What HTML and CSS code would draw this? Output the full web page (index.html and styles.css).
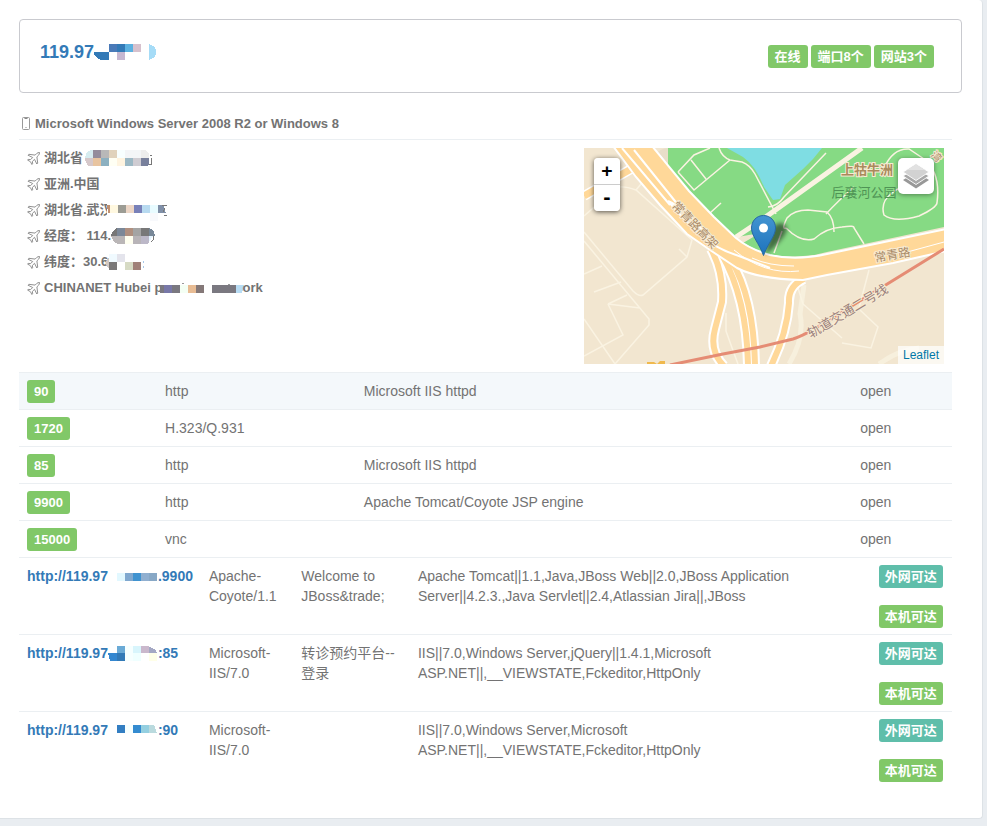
FILE: index.html
```html
<!DOCTYPE html>
<html lang="zh-CN">
<head>
<meta charset="utf-8">
<meta name="viewport" content="width=device-width, initial-scale=1">
<title>主机详情</title>
<link rel="stylesheet" href="styles.css">
</head>
<body>
<svg class="defs" width="0" height="0" aria-hidden="true">
  <symbol id="plane" viewBox="0 0 13 13">
    <path d="M12.5.5C11.500.5 10.500.7 9.700 1.500L8.100 3.100 1.900 2.300 1 3.200 5.700 5.500 3.600 7.600 1.200 7.400.5 8.100 3.200 9.500 3.500 9.800 4.900 12.500 5.600 11.800 5.400 9.400 7.500 7.300 9.800 12 10.700 11.100 9.900 4.900 11.500 3.300C12.300 2.500 12.500 1.500 12.500.5Z" fill="none" stroke="#858585" stroke-width=".9" stroke-linejoin="round"/>
  </symbol>
</svg>
<main class="panel">
  <header class="host">
    <h1 class="host-ip"><a href="#">119.97<svg class="mosaic" width="63" height="16" viewBox="1 0 63 16" shape-rendering="crispEdges" aria-hidden="true"><path d="M0 8h16v8H8Q3 15 0 8Z" fill="#337ab7"/><path d="M16 0h8v8h-8z" fill="#4a7ab8"/><path d="M24 0h8v8h-8z" fill="#337ab7"/><path d="M32 0h8v8h-8z" fill="#5cb1e0"/><path d="M40 0h8v8h-8z" fill="#d6c1cd"/><path d="M24 8h8v8h-8z" fill="#c6b7d1"/><path d="M56 0q7 2 7 8t-7 8z" fill="#a6dcf7"/></svg></a></h1>
    <div class="tags"><span class="tag">在线</span><span class="tag">端口8个</span><span class="tag">网站3个</span></div>
  </header>

  <section class="detail">
    <h2 class="os"><svg width="12" height="14" viewBox="0 0 12 14" aria-hidden="true"><rect x="3.500" y=".5" width="7" height="12" rx="1" fill="none" stroke="#999"/><path d="M5.500 1.500h3M6.500 10.500h1" stroke="#888"/></svg>Microsoft Windows Server 2008 R2 or Windows 8</h2>

    <div class="where">
      <ul class="facts">
        <li><svg class="plane"><use href="#plane"/></svg><span>湖北省</span><svg class="mosaic" width="70" height="16" shape-rendering="crispEdges" aria-hidden="true"><path d="M2 8h8v8H6Q2 13 2 8" fill="#d6c8ca"/><path d="M2 8q1-7 6-8h2v8z" fill="#d6ecf0"/><path d="M10 0h8v8h-8z" fill="#948c9c"/><path d="M18 0h8v8h-8z" fill="#b8b8b8"/><path d="M26 0h8v8h-8z" fill="#e0d2bc"/><path d="M34 0h8v8h-8z" fill="#f8ffff"/><path d="M42 0h16v8H42z" fill="#f3f5f7"/><path d="M58 0h4l4 4v4h-8z" fill="#ededed"/><path d="M10 8h8v8h-8z" fill="#e8c4a0"/><path d="M18 8h8v8h-8z" fill="#8cb0c0"/><path d="M26 8h8v8h-8z" fill="#fffff4"/><path d="M34 8h8v8h-8z" fill="#fff4e0"/><path d="M42 8h8v8h-8z" fill="#9cb8c4"/><path d="M50 8h8v8h-8z" fill="#cfccd2"/><path d="M58 8h8v6l-2 2h-6z" fill="#78809c"/><path d="M67 5h2M68 8v7M66 14h3" stroke="#777"/></svg></li>
        <li><svg class="plane"><use href="#plane"/></svg><span>亚洲.中国</span></li>
        <li><svg class="plane"><use href="#plane"/></svg><span>湖北省.武汉</span><svg class="mosaic over" width="60" height="16" shape-rendering="crispEdges" aria-hidden="true"><path d="M0 0h60v16H0z" fill="#fff"/><path d="M0 3h3v8H1z" fill="#c09070"/><path d="M3 3h8v8H3z" fill="#fff8e0"/><path d="M11 3h8v8h-8z" fill="#9c9c94"/><path d="M19 3h8v8h-8z" fill="#ecd6c6"/><path d="M27 3h8v8h-8z" fill="#7880b8"/><path d="M35 3h8v8h-8z" fill="#b8daf0"/><path d="M43 3h8v8h-8z" fill="#e8fbff"/><path d="M51 3h5l3 8h-8z" fill="#8090a8"/><path d="M43 11h8v8h-8z" fill="#f8f9fc"/><path d="M55 3h5M57 13h3M58 6l-2 4" stroke="#777"/></svg></li>
        <li><svg class="plane"><use href="#plane"/></svg><span>经度：&nbsp;114.</span><svg class="mosaic" width="44" height="16" shape-rendering="crispEdges" aria-hidden="true"><path d="M0 8q1-6 6-8v8z" fill="#777"/><path d="M0 8h14v8H8Q2 15 0 8" fill="#bab6b7"/><path d="M6 0h8v8H6z" fill="#7c8898"/><path d="M14 0h8v8h-8z" fill="#b09080"/><path d="M22 0h8v8h-8z" fill="#a4a4a4"/><path d="M30 0h8v8h-8z" fill="#787878"/><path d="M38 0q5 1 6 8h-6z" fill="#788898"/><path d="M14 8h8v8h-8z" fill="#fffff0"/><path d="M22 8h8v8h-8z" fill="#b8b4b8"/><path d="M30 8h8v7l-3 1h-5z" fill="#bcb8c8"/><path d="M38 8h4l-4 6z" fill="#e4f4ff"/><path d="M43 8q0 4-3 6" stroke="#777" fill="none"/></svg></li>
        <li><svg class="plane"><use href="#plane"/></svg><span>纬度：30.6</span><svg class="mosaic" width="38" height="16" viewBox="2 0 38 16" shape-rendering="crispEdges" aria-hidden="true"><path d="M0 8l3-5v12Q0 12 0 8" fill="#d2c8c2"/><path d="M3 0h8v8H3z" fill="#f0faff"/><path d="M11 0h8v8h-8z" fill="#e4e4ec"/><path d="M3 8h8v8H3z" fill="#7a7878"/><path d="M19 8h8v8h-8z" fill="#d6dac4"/><path d="M27 8h8v8h-8z" fill="#a08078"/><path d="M37 7v2M37 12v2" stroke="#a8c8e8"/></svg></li>
        <li><svg class="plane"><use href="#plane"/></svg><span>CHINANET Hubei p</span><svg class="mosaic" width="80" height="16" viewBox="2 0 80 16" shape-rendering="crispEdges" aria-hidden="true"><path d="M0 5h4v8H0zM12 5h8v8h-8zM52 5h24v8H52z" fill="#7a7880"/><path d="M4 5h8v8H4z" fill="#7878a8"/><path d="M20 5h8v8h-8z" fill="#f4fff4"/><path d="M28 5h8v8h-8z" fill="#e8bc94"/><path d="M36 5h8v8h-8z" fill="#847878"/><path d="M76 5h8l-2 8h-6z" fill="#b8dcf4"/><path d="M22 3h2M68 4h2" stroke="#999"/></svg><span>ork</span></li>
      </ul>

      <div class="map">
        <svg class="map-tiles" viewBox="0 0 360 216" preserveAspectRatio="xMidYMid slice" role="img" aria-label="地图">
          <defs>
            <linearGradient id="pin" x2="0" y2="1"><stop stop-color="#4394d1"/><stop offset="1" stop-color="#1d73bd"/></linearGradient>
            <filter id="soft" x="-30%" y="-30%" width="160%" height="160%"><feGaussianBlur stdDeviation="2"/></filter>
          </defs>
          <path d="M0 0h360v216H0z" fill="#f2e6d0"/>
          <path d="M70 8Q76 0 84 0v24z" fill="#e8dec9"/>
          <path d="M84 0h276v79L243 104Q220 111 183 107L159 95 176 85 148 90 84 20z" fill="#86da84"/>
          <path d="M143 0L159 9Q172 18 180 39L189 52 196 51 201 37 219 21 229 11 238 0z" fill="#7fdde3"/>
          <g fill="none" stroke="#faf3e2" stroke-width="1.500">
            <path d="M135 0Q138 9 146 12L158 14Q166 17 171 26L192 66"/>
            <path d="M94 24L110 7 126 0M94 24L110 42 146 12M107 12L122 31M126 65L137 55"/>
            <path d="M278 0L176 73 152 89" stroke-width="5"/>
            <path d="M184 59Q194 58 200 49L242 5M202 80Q197 82 203 70Q210 62 224 62L243 64Q250 70 250 84M202 80Q217 95 230 91Q242 80 258 79Q271 77 270 80L280 96M198 83L190 105"/>
            <path d="M300 20Q309 0 325 1L340 11Q357 25 353 55Q352 60 335 68Q310 75 300 67Q296 54 308 45Q318 35 350 37M242 66Q254 53 270 39"/>
            <path d="M0 68L32 40Q38 37 52 42L108 92 103 109 59 147Q55 149 49 143L0 84M52 42L57 36M103 109L95 101"/>
            <path d="M0 171L31 216 65 177V171L0 93M0 126L18 118M10 144L37 134M24 156L43 147M24 156L39 187 0 208M24 156L56 160"/>
            <path d="M142 165V183Q148 200 154 216M219 156L214 140M219 156L258 190M246 178L275 160 285 122M258 195L287 200 294 179 276 162"/>
            <path d="M205 216Q221 190 216 166L220 137M295 216Q316 201 335 200" stroke-width="5" opacity=".7"/>
          </g>
          <g fill="none" stroke="#fff" stroke-width="10">
            <path d="M54 17L0 48"/><path d="M127 101Q140 125 138 154L131 181Q125 203 140 218"/><path d="M137 105Q163 150 164 218M147 112Q170 150 171 218M220 131Q204 138 205 155Q203 185 187 218"/>
          </g>
          <g fill="none" stroke="#ffd899" stroke-width="6">
            <path d="M54 17L0 48" stroke-width="7"/><path d="M127 101Q140 125 138 154L131 181Q125 203 140 218"/><path d="M137 105Q163 150 164 218M147 112Q170 150 171 218M220 131Q204 138 205 155Q203 185 187 218"/>
          </g>
          <path d="M29-2L52 29 76 57 103 86 129 104 153 120Q174 131 219 132L243 127 309 115 362 103V81L243 106Q212 113 186 107Q165 101 152 90L130 69 105 43 68-2z" fill="#ffd899" stroke="#fff" stroke-width="2"/>
          <g fill="none" stroke="#fff" stroke-width="2">
            <path d="M38 0L86 57M50 2L119 88Q130 100 155 108L186 120"/>
            <path d="M168 110Q185 118 210 118M150 102Q180 127 215 123M316 106L360 94" stroke-width="1"/>
            <path d="M84 53Q103 61 123 88L132 98Q108 82 84 53" fill="#f2e6d0"/>
          </g>
          <path d="M63 214h7l3 2 3-3h5v3H63z" fill="#f0b94d"/>
          <path d="M86 217L139 206 176 199 209 191Q225 186 266 159L360 101" fill="none" stroke="#e58c74" stroke-width="3"/>
          <g class="map-text" text-anchor="middle">
            <text class="road small" transform="translate(108 80) rotate(46)">常青路高架</text>
            <text class="place" x="283" y="26">上牯牛洲</text>
            <text class="park" x="280" y="49">后襄河公园</text>
            <text class="road small" transform="translate(309 111) rotate(-10)">常青路</text>
            <text class="metro" transform="translate(266 167) rotate(-31)">轨道交通二号线</text>
            <text class="road tiny" transform="translate(350 11) rotate(45)">湾</text>
          </g>
          <path d="M181 107L188 80Q198 70 203 80Q203 89 181 107" fill="#000" opacity=".5" filter="url(#soft)"/>
          <path d="M179.500 67.500C172.500 67.500 167.500 73 167.500 80C167.500 88 175 95 179.500 107.500C184 95 191.500 88 191.500 80C191.500 73 186.500 67.500 179.500 67.500Z" fill="url(#pin)" stroke="#2868a0"/>
          <circle cx="179.500" cy="80" r="4.500" fill="#fff"/>
        </svg>
        <div class="zoom">
          <button type="button" aria-label="放大">+</button>
          <button type="button" aria-label="缩小">-</button>
        </div>
        <button type="button" class="layers" aria-label="图层">
          <svg width="26" height="26" viewBox="0 0 26 26" aria-hidden="true"><path d="M0 17L13 9l13 8L13 25.500z" fill="#989898"/><path d="M0 13L13 5l13 8L13 21.500z" fill="#a8a8a8" stroke="#fff" stroke-width=".9"/><path d="M0 9L13 .800l13 8.200L13 17.500z" fill="#d2d2d2" stroke="#fff" stroke-width=".9"/><path d="M4 7L13 1.200 22 7z" fill="#e2e2e2"/></svg>
        </button>
        <div class="credit"><a href="#">Leaflet</a></div>
      </div>
    </div>

    <table class="ports">
      <colgroup><col class="p-port"><col class="p-service"><col class="p-product"><col></colgroup>
      <tbody>
        <tr class="active"><td class="has-tag"><span class="tag">90</span></td><td>http</td><td>Microsoft IIS httpd</td><td>open</td></tr>
        <tr><td class="has-tag"><span class="tag">1720</span></td><td>H.323/Q.931</td><td></td><td>open</td></tr>
        <tr><td class="has-tag"><span class="tag">85</span></td><td>http</td><td>Microsoft IIS httpd</td><td>open</td></tr>
        <tr><td class="has-tag"><span class="tag">9900</span></td><td>http</td><td>Apache Tomcat/Coyote JSP engine</td><td>open</td></tr>
        <tr><td class="has-tag"><span class="tag">15000</span></td><td>vnc</td><td></td><td>open</td></tr>
      </tbody>
    </table>

    <table class="sites">
      <colgroup><col class="s-url"><col class="s-server"><col class="s-title"><col class="s-stack"><col></colgroup>
      <tbody>
        <tr>
          <td><a class="url" href="#">http://119.97<svg class="mosaic" width="50" height="16" viewBox="-2 0 50 16" shape-rendering="crispEdges" aria-hidden="true"><path d="M7 5h8v8H7z" fill="#e2f8ff"/><path d="M15 5h8v8h-8z" fill="#80a8cf"/><path d="M23 5h8v8h-8z" fill="#4093d0"/><path d="M31 5h8v8h-8z" fill="#90afd0"/><path d="M39 5h8v8h-8z" fill="#88a8c6"/></svg>.9900</a></td>
          <td>Apache-<br>Coyote/1.1</td><td>Welcome to JBoss&amp;trade;</td>
          <td>Apache Tomcat||1.1,Java,JBoss Web||2.0,JBoss Application Server||4.2.3.,Java Servlet||2.4,Atlassian Jira||,JBoss</td>
          <td class="has-tag"><div class="reach"><span class="tag teal">外网可达</span><span class="tag">本机可达</span></div></td>
        </tr>
        <tr>
          <td><a class="url" href="#">http://119.97<svg class="mosaic" width="50" height="16" viewBox="-2 0 50 16" shape-rendering="crispEdges" aria-hidden="true"><path d="M-2 8h9v8H0z" fill="#3487d0"/><path d="M7 8h8v8H7z" fill="#337ab7"/><path d="M7 1h8v7H7z" fill="#6aaad6"/><path d="M15 1h8v15h-8z" fill="#f6ffff"/><path d="M23 1h8v7h-8z" fill="#d8f5fc"/><path d="M23 8h8v8h-8z" fill="#efffff"/><path d="M31 1h8v7h-8z" fill="#cab8cc"/><path d="M39 2q6 1 8 6h-8z" fill="#a4a8c4"/><path d="M39 8h8v8h-8z" fill="#ffffe8"/></svg>:85</a></td>
          <td>Microsoft-<br>IIS/7.0</td><td>转诊预约平台--登录</td>
          <td>IIS||7.0,Windows Server,jQuery||1.4.1,Microsoft ASP.NET||,__VIEWSTATE,Fckeditor,HttpOnly</td>
          <td class="has-tag"><div class="reach"><span class="tag teal">外网可达</span><span class="tag">本机可达</span></div></td>
        </tr>
        <tr>
          <td><a class="url" href="#">http://119.97<svg class="mosaic" width="50" height="16" viewBox="-2 0 50 16" shape-rendering="crispEdges" aria-hidden="true"><path d="M7 3h8v8H7z" fill="#337ec2"/><path d="M15 3h8v8h-8z" fill="#f6ffff"/><path d="M23 3h8v8h-8z" fill="#348bd0"/><path d="M31 3h8v8h-8z" fill="#94cfe0"/><path d="M39 3h5l3 8h-8z" fill="#badade"/></svg>:90</a></td>
          <td>Microsoft-<br>IIS/7.0</td><td></td>
          <td>IIS||7.0,Windows Server,Microsoft ASP.NET||,__VIEWSTATE,Fckeditor,HttpOnly</td>
          <td class="has-tag"><div class="reach"><span class="tag teal">外网可达</span><span class="tag">本机可达</span></div></td>
        </tr>
      </tbody>
    </table>
  </section>
</main>
</body>
</html>
```
FILE: styles.css
```css
* { box-sizing: border-box; }

body {
  margin: 0;
  padding: 0 4px 8px 0;
  background: #e9edf1;
  color: #737373;
  font: 14px/20px "Liberation Sans", "Noto Sans CJK SC", sans-serif;
}

a { color: #337ab7; text-decoration: none; }
h1, h2, ul { margin: 0; padding: 0; }
.defs { position: absolute; }
.mosaic { flex: none; }
.mosaic.over { margin-left: -6px; }

.panel {
  padding: 19px 20px 30px 19px;
  background: #fff;
  border-bottom: 1px solid #dde2e6;
  border-right: 1px solid #dde2e6;
  border-radius: 0 4px 4px 0;
}

.host {
  display: flex;
  justify-content: space-between;
  align-items: flex-start;
  padding: 25px 27px 24px 20px;
  border: 1px solid #c9cacf;
  border-radius: 4px;
}

.host-ip { font-size: 18px; line-height: 14px; }
.host-ip a { display: flex; align-items: center; height: 14px; }
.tags { display: flex; gap: 3px; }

.tag {
  display: inline-block;
  padding: 0 7px;
  border-radius: 3px;
  background: #81c868;
  color: #fff;
  font-size: 13px;
  font-weight: bold;
  line-height: 23px;
  white-space: nowrap;
}
.tag.teal { background: #5fbeaa; }

.detail { margin-right: 10px; }

.os {
  display: flex;
  align-items: center;
  gap: 4px;
  margin-top: 21px;
  padding-bottom: 5px;
  font-size: 13px;
  line-height: 20px;
}

.where {
  display: flex;
  justify-content: space-between;
  padding: 8px;
  border-top: 1px solid #ebeff2;
}

.facts {
  display: flex;
  flex-direction: column;
  gap: 6px;
  list-style: none;
  font-size: 13px;
  font-weight: bold;
}
.facts li { display: flex; align-items: center; white-space: nowrap; }
.facts .mosaic { overflow: visible; }
.plane { flex: none; width: 13px; height: 13px; margin-right: 4px; }

.map {
  position: relative;
  flex: 0 1 360px;
  height: 216px;
  overflow: hidden;
}
.map-tiles { display: block; width: 100%; height: 100%; }
.map-text {
  font-size: 13px;
  paint-order: stroke;
  stroke: #f7ead2;
  stroke-width: 2px;
}
.road { fill: #a98a68; }
.small { font-size: 12px; }
.tiny { font-size: 10px; }
.place { fill: #a98a5c; font-weight: bold; }
.park { fill: #4f9455; stroke: none; }
.metro { fill: #9a7f7c; }

.zoom, .layers, .credit { position: absolute; }
.zoom {
  top: 10px;
  left: 10px;
  width: 26px;
  border-radius: 4px;
  box-shadow: 0 1px 5px rgba(0, 0, 0, .65);
}
.zoom button {
  display: block;
  width: 100%;
  height: 26px;
  padding: 0;
  border: 0;
  border-radius: 0 0 4px 4px;
  background: #fff;
  color: #000;
  font: bold 18px/26px "DejaVu Sans Mono", monospace;
}
.zoom button:first-child {
  height: 27px;
  border-bottom: 1px solid #ccc;
  border-radius: 4px 4px 0 0;
}
.layers {
  top: 10px;
  right: 10px;
  display: grid;
  place-items: center;
  width: 36px;
  height: 36px;
  padding: 0;
  border: 0;
  border-radius: 5px;
  background: #fff;
  box-shadow: 0 1px 5px rgba(0, 0, 0, .4);
}
.credit {
  right: 0;
  bottom: 0;
  padding: 0 5px;
  background: rgba(255, 255, 255, .7);
  font-size: 12px;
  line-height: 18px;
}
.credit a { color: #0078a8; }

table {
  width: 100%;
  border-collapse: separate;
  border-spacing: 0;
  table-layout: fixed;
}
td { padding: 8px; border-top: 1px solid #ebeff2; vertical-align: top; }
td.has-tag { padding-top: 7px; padding-bottom: 6px; }

.ports td { height: 37px; }
.ports .tag { display: table; }
.active td { background: #f4f8fb; }
.p-port { width: 14.8%; }
.p-service { width: 21.3%; }
.p-product { width: 53.2%; }

.sites td { height: 77px; }
.s-url { width: 19.5%; }
.s-server { width: 9.9%; }
.s-title { width: 12.5%; }
.s-stack { width: 49.4%; }
.url { display: flex; align-items: center; font-weight: bold; white-space: nowrap; }
.reach {
  display: flex;
  flex-direction: column;
  align-items: flex-start;
  gap: 17px;
}
.reach .tag { padding: 0 6px; }
```
